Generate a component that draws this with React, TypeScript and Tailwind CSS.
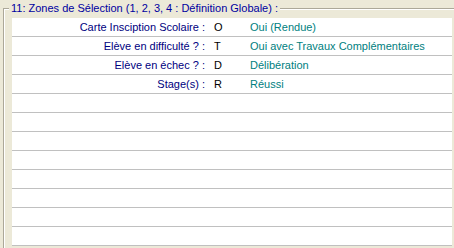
import React from "react";

const rows: { label: string; code: string; value: string }[] = [
  { label: "Carte Insciption Scolaire :", code: "O", value: "Oui (Rendue)" },
  { label: "Elève en difficulté ? :", code: "T", value: "Oui avec Travaux Complémentaires" },
  { label: "Elève en échec ? :", code: "D", value: "Délibération" },
  { label: "Stage(s) :", code: "R", value: "Réussi" },
];

export default function App() {
  const all = [...rows];
  while (all.length < 12) all.push({ label: "", code: "", value: "" });
  return (
    <div
      className="w-[454px] h-[248px] bg-[#ECE9D8] overflow-hidden text-[11px] leading-[18px]"
      style={{ fontFamily: '"Liberation Sans", Arial, sans-serif' }}
    >
      <div className="relative mt-[8px] ml-[3px] border-l border-t border-[#ACA899] h-[240px]">
        <div className="border-l border-t border-white h-full">
          <div className="absolute left-[5px] top-[-9px] px-[2px] bg-[#ECE9D8] text-[#0000A0] leading-[16px]">
            11: Zones de Sélection (1, 2, 3, 4 : Définition Globale) :
          </div>
          <div className="ml-[7px] mt-[8px] w-[440px] bg-white">
            {all.map((r, i) => (
              <div key={i} className="flex h-[19px] border-b border-[#C0C0C0]">
                <div className="w-[193px] text-right text-[#000080] whitespace-nowrap">{r.label}</div>
                <div className="w-[45px] pl-[9px] text-black">{r.code}</div>
                <div className="flex-1 text-[#008080] whitespace-nowrap">{r.value}</div>
              </div>
            ))}
          </div>
        </div>
      </div>
    </div>
  );
}
